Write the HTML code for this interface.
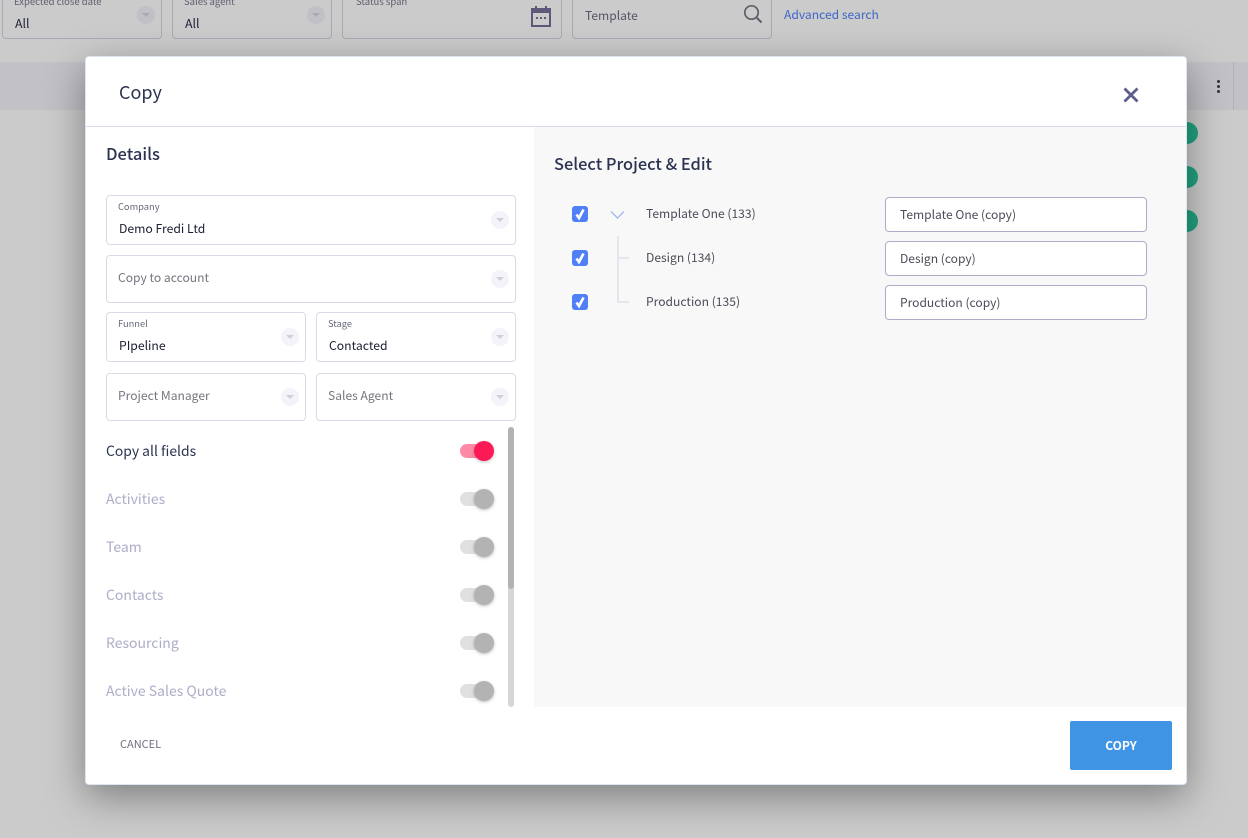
<!DOCTYPE html>
<html><head><meta charset="utf-8"><style>
html,body{margin:0;padding:0}
body{width:1248px;height:838px;position:relative;overflow:hidden;background:#cbcbcb;font-family:"Noto Sans CJK JP","Liberation Sans",sans-serif;color:#2b3350}
div,span.t{position:absolute;box-sizing:border-box}
.t{white-space:nowrap;line-height:18px;height:18px}
.f{border:1px solid #a9a8b3;border-radius:4px}
.b{border:1px solid #d8dbe6;border-radius:4px;background:#fff}
.c{width:18px;height:18px;border-radius:50%;background:#f3f3f9}
.c:after{content:"";position:absolute;left:5px;top:7px;border-left:4px solid transparent;border-right:4px solid transparent;border-top:4px solid #cfcfd8}
.g .c{background:#c0c0c6}.g .c:after{border-top-color:#a9a9b0}
.l{font-size:12.1px;color:#75757f}
.v{font-size:12.2px;color:#1b1f33}
.s{font-size:9.3px;color:#666a78}
.tr{left:460px;width:28px;height:14px;border-radius:7px;background:#e0e0e0}
.kn{left:474px;width:20px;height:20px;border-radius:50%;background:#b3b3b3;box-shadow:0 1px 3px rgba(0,0,0,.25)}
.o{font-size:14px;color:#adadc8;left:106px}
.cb{left:572px;width:16px;height:16px;border-radius:3px;background:#4f80f5}
.cb svg{position:absolute;left:0;top:0}
.n{font-size:12.1px;color:#4c4c58;left:646px}
.i{left:885px;width:262px;height:35px;background:#fff;border:1px solid #aeadc9;border-radius:4px}
.it{left:900px;font-size:12.05px;color:#4c4c58}
</style></head><body>

<div class="g">
<div class="f" style="left:2px;top:-10px;width:160px;height:49px"></div>
<div class="f" style="left:172px;top:-10px;width:160px;height:49px"></div>
<div class="f" style="left:342px;top:-10px;width:220px;height:49px"></div>
<div class="f" style="left:572px;top:-10px;width:200px;height:49px"></div>
<div class="c" style="left:137px;top:6px"></div>
<div class="c" style="left:307px;top:6px"></div>
</div>
<span class="t" style="left:14px;top:-8px;font-size:9.5px;color:#5d5d6e">Expected close date</span>
<span class="t" style="left:184px;top:-8px;font-size:9.5px;color:#5d5d6e">Sales agent</span>
<span class="t" style="left:356px;top:-8px;font-size:9.5px;color:#5d5d6e">Status span</span>
<span class="t" style="left:15px;top:14px;font-size:12.4px;color:#23263a">All</span>
<span class="t" style="left:185px;top:14px;font-size:12.4px;color:#23263a">All</span>
<span class="t" style="left:585px;top:7px;font-size:12.1px;color:#55556a">Template</span>
<span class="t" style="left:784px;top:6px;font-size:12.1px;color:#3f66c8">Advanced search</span>
<svg style="position:absolute;left:531px;top:5px" width="20" height="22" viewBox="0 0 20 22"><path d="M1 4h18v17H1z" fill="none" stroke="#5c5a78" stroke-width="2"/><path d="M1 3h18v5H1z" fill="#5c5a78"/><path d="M5 1v3M15 1v3" stroke="#5c5a78" stroke-width="2"/><path d="M5 12h2v2H5zM9 12h2v2H9zM13 12h2v2h-2z" fill="#5c5a78"/></svg>
<svg style="position:absolute;left:743px;top:4px" width="20" height="20" viewBox="0 0 20 20"><circle cx="8.5" cy="8.5" r="6.7" fill="none" stroke="#5f5f6c" stroke-width="1.7"/><path d="M13.5 13.5l5 5" stroke="#5f5f6c" stroke-width="2"/></svg>

<div style="left:0;top:62px;width:1248px;height:48px;background:#c1c1c6"></div>
<div style="left:1233px;top:62px;width:1px;height:48px;background:#b1b1b6"></div>
<div style="left:1216.5px;top:80px;width:3px;height:3px;border-radius:50%;background:#33333d"></div>
<div style="left:1216.5px;top:85px;width:3px;height:3px;border-radius:50%;background:#33333d"></div>
<div style="left:1216.5px;top:90px;width:3px;height:3px;border-radius:50%;background:#33333d"></div>
<div style="left:1176px;top:122px;width:22px;height:22px;border-radius:50%;background:#22a27f"></div>
<div style="left:1176px;top:166px;width:22px;height:22px;border-radius:50%;background:#22a27f"></div>
<div style="left:1176px;top:210px;width:22px;height:22px;border-radius:50%;background:#22a27f"></div>

<div style="left:85px;top:56px;width:1102px;height:729px;background:#fff;border:1px solid #dde5f3;border-radius:4px;box-shadow:0 12px 40px rgba(0,0,0,.38)"></div>
<div style="left:86px;top:126px;width:1100px;height:1px;background:#d9dce8"></div>
<div style="left:534px;top:127px;width:652px;height:580px;background:#f8f8f9"></div>

<span class="t" style="left:119px;top:80px;font-size:18px;height:24px;line-height:24px;color:#2b3350">Copy</span>
<svg style="position:absolute;left:1122px;top:86px" width="18" height="18" viewBox="0 0 18 18"><path d="M2.5 2.5l13 13M15.5 2.500l-13 13" stroke="#5c5f8c" stroke-width="2.800"/></svg>

<span class="t" style="left:106px;top:142px;font-size:16.500px;height:22px;line-height:22px;font-weight:500;color:#2b3350">Details</span>
<span class="t" style="left:554px;top:152px;font-size:16.400px;height:22px;line-height:22px;font-weight:500;color:#2b3350">Select Project &amp; Edit</span>

<div class="b" style="left:106px;top:195px;width:410px;height:50px"></div>
<div class="b" style="left:106px;top:255px;width:410px;height:48px"></div>
<div class="b" style="left:106px;top:312px;width:200px;height:50px"></div>
<div class="b" style="left:316px;top:312px;width:200px;height:50px"></div>
<div class="b" style="left:106px;top:373px;width:200px;height:48px"></div>
<div class="b" style="left:316px;top:373px;width:200px;height:48px"></div>
<div class="c" style="left:491px;top:211px"></div>
<div class="c" style="left:491px;top:270px"></div>
<div class="c" style="left:281px;top:328px"></div>
<div class="c" style="left:491px;top:328px"></div>
<div class="c" style="left:281px;top:388px"></div>
<div class="c" style="left:491px;top:388px"></div>
<span class="t s" style="left:118px;top:197px">Company</span>
<span class="t v" style="left:119px;top:219px">Demo Fredi Ltd</span>
<span class="t l" style="left:118px;top:269px">Copy to account</span>
<span class="t s" style="left:118px;top:314px">Funnel</span>
<span class="t v" style="left:119px;top:336px">PIpeline</span>
<span class="t s" style="left:328px;top:314px">Stage</span>
<span class="t v" style="left:329px;top:336px">Contacted</span>
<span class="t l" style="left:118px;top:387px">Project Manager</span>
<span class="t l" style="left:328px;top:387px">Sales Agent</span>

<span class="t" style="left:106px;top:442px;font-size:13.900px;color:#2b3350">Copy all fields</span>
<div class="tr" style="top:444px;background:#ff8aa6"></div><div class="kn" style="top:441px;background:#fb1a55"></div>
<span class="t o" style="top:490px">Activities</span>
<div class="tr" style="top:492px"></div><div class="kn" style="top:489px"></div>
<span class="t o" style="top:538px">Team</span>
<div class="tr" style="top:540px"></div><div class="kn" style="top:537px"></div>
<span class="t o" style="top:586px">Contacts</span>
<div class="tr" style="top:588px"></div><div class="kn" style="top:585px"></div>
<span class="t o" style="top:634px">Resourcing</span>
<div class="tr" style="top:636px"></div><div class="kn" style="top:633px"></div>
<span class="t o" style="top:682px">Active Sales Quote</span>
<div class="tr" style="top:684px"></div><div class="kn" style="top:681px"></div>

<div style="left:508px;top:427px;width:6px;height:280px;border-radius:3px;background:#d6d6d6"></div>
<div style="left:508px;top:427px;width:6px;height:162px;border-radius:3px;background:#b3b3b3"></div>

<div class="cb" style="top:206px"><svg width="16" height="16" viewBox="0 0 16 16"><path d="M4.500 8.500l2.500 3.500L11.500 3.500" fill="none" stroke="#fff" stroke-width="2.600"/></svg></div>
<div class="cb" style="top:250px"><svg width="16" height="16" viewBox="0 0 16 16"><path d="M4.500 8.500l2.500 3.500L11.500 3.500" fill="none" stroke="#fff" stroke-width="2.600"/></svg></div>
<div class="cb" style="top:294px"><svg width="16" height="16" viewBox="0 0 16 16"><path d="M4.500 8.500l2.500 3.500L11.500 3.500" fill="none" stroke="#fff" stroke-width="2.600"/></svg></div>
<svg style="position:absolute;left:610px;top:210px" width="16" height="10" viewBox="0 0 16 10"><path d="M1 1.500l6.500 6.500L14 1.500" fill="none" stroke="#8ea9ee" stroke-width="1"/></svg>
<div style="left:617px;top:236px;width:2px;height:67px;background:#e4e5ed"></div>
<div style="left:617px;top:257px;width:12px;height:2px;background:#e4e5ed"></div>
<div style="left:617px;top:301px;width:12px;height:2px;background:#e4e5ed"></div>
<span class="t n" style="top:205px">Template One (133)</span>
<span class="t n" style="top:249px">Design (134)</span>
<span class="t n" style="top:293px">Production (135)</span>

<div class="i" style="top:197px"></div>
<div class="i" style="top:241px"></div>
<div class="i" style="top:285px"></div>
<span class="t it" style="top:206px">Template One (copy)</span>
<span class="t it" style="top:250px">Design (copy)</span>
<span class="t it" style="top:294px">Production (copy)</span>

<span class="t" style="left:120px;top:735px;font-size:11px;color:#6f7080">CANCEL</span>
<div style="left:1070px;top:721px;width:102px;height:49px;background:#3f94e4;border-radius:2px"></div>
<span class="t" style="left:1070px;width:102px;text-align:center;top:737px;font-size:12px;font-weight:700;color:#fff">COPY</span>
</body></html>
